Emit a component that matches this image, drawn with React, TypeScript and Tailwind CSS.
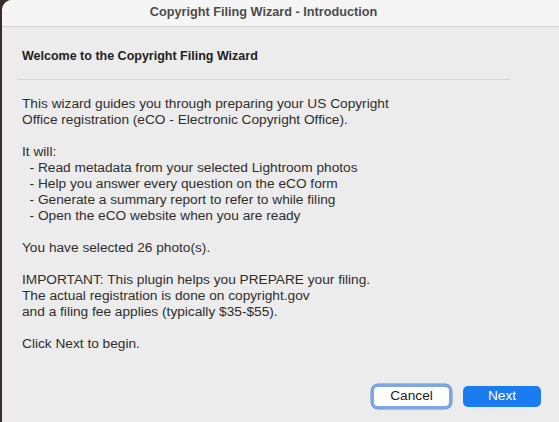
import React from "react";

export default function App() {
  const font = { fontFamily: '"Liberation Sans", Arial, sans-serif' };
  const lines: string[] = [
    "This wizard guides you through preparing your US Copyright",
    "Office registration (eCO - Electronic Copyright Office).",
    "",
    "It will:",
    "  - Read metadata from your selected Lightroom photos",
    "  - Help you answer every question on the eCO form",
    "  - Generate a summary report to refer to while filing",
    "  - Open the eCO website when you are ready",
    "",
    "You have selected 26 photo(s).",
    "",
    "IMPORTANT: This plugin helps you PREPARE your filing.",
    "The actual registration is done on copyright.gov",
    "and a filing fee applies (typically $35-$55).",
    "",
    "Click Next to begin.",
  ];
  return (
    <div className="w-[559px] h-[422px] bg-[#3b2c27] flex overflow-hidden" style={font}>
      <div className="ml-[2px] flex-1 flex flex-col bg-[#ececec] rounded-tl-[10px] overflow-hidden">
        <div className="h-[27px] shrink-0 bg-[#f5f5f5] border-b border-[#d2d2d2] flex items-center justify-center pr-[34px]">
          <span className="text-[12.7px] font-bold text-[#4b4b4b]">
            Copyright Filing Wizard - Introduction
          </span>
        </div>
        <div className="flex-1 flex flex-col px-[15px]">
          <div className="h-[53px] flex items-center border-b border-[#d6d6d6] mr-[34px] pl-[5px] pt-[7px]">
            <span className="text-[12.5px] font-bold text-[#222]">Welcome to the Copyright Filing Wizard</span>
          </div>
          <div className="pl-[5px] pt-[16px] text-[13.7px] leading-[16px] text-[#2e2e2e] whitespace-pre">
            {lines.map((l, i) => (
              <div key={i} className="h-[16px]">
                {l}
              </div>
            ))}
          </div>
          <div className="flex-1" />
          <div className="flex justify-end gap-[11px] pb-[13px] pr-[3px]">
            <button className="w-[81px] h-[25px] rounded-[7px] border-[3px] border-[#7da6e3] bg-white text-[13.7px] text-[#222] flex items-center justify-center shadow-[0_0_0_0.5px_#5f8ed8]">
              Cancel
            </button>
            <button className="w-[78px] h-[21px] mt-[2px] rounded-[5px] bg-[#1b7cf2] text-[13.7px] text-white flex items-center justify-center">
              Next
            </button>
          </div>
        </div>
      </div>
    </div>
  );
}
